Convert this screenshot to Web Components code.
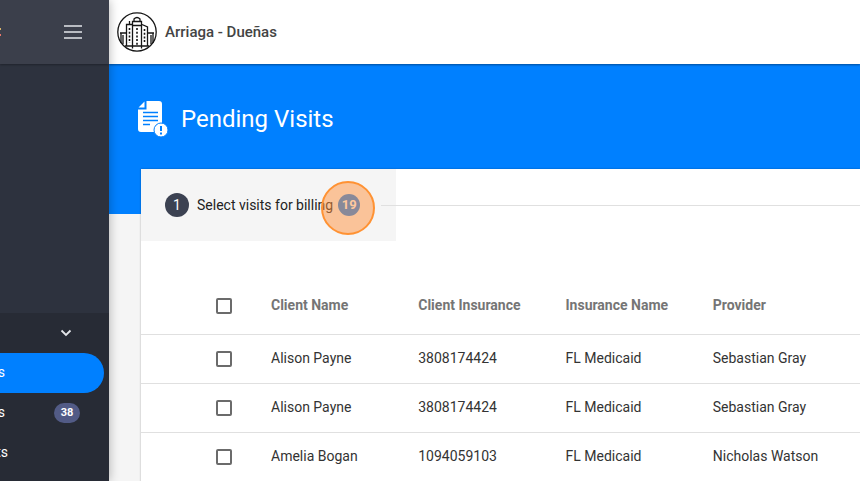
<!DOCTYPE html>
<html lang="en">
<head>
<meta charset="utf-8">
<meta name="viewport" content="width=device-width, initial-scale=1">
<title>Pending Visits</title>
<style>
  html, body { margin: 0; height: 100%; }
  body { font-family: Roboto, "Liberation Sans", sans-serif; font-size: 14px; line-height: 20px; color: #333; background: #f5f5f5; overflow: hidden; }
</style>
</head>
<body>
<app-shell>
  <side-bar slot="side">
    <nav-item active>s</nav-item>
    <nav-item count="38">s</nav-item>
    <nav-item inset>ts</nav-item>
  </side-bar>
  <top-bar slot="top">Arriaga - Dueñas</top-bar>
  <page-header slot="page">Pending Visits</page-header>
  <visits-card slot="page">
    <step-header number="1" count="19">Select visits for billing</step-header>
    <visits-table></visits-table>
  </visits-card>
</app-shell>

<script>
const define = (name, html, setup) => {
  const template = document.createElement('template');
  template.innerHTML = html;
  customElements.define(name, class extends HTMLElement {
    constructor() {
      super();
      this.attachShadow({ mode: 'open' }).append(template.content.cloneNode(true));
    }
    connectedCallback() { if (setup) setup(this, this.shadowRoot); }
  });
};

define('app-shell', `
<style>
  :host { display: grid; grid-template-columns: 109px minmax(0, 1fr); height: 100vh; }
  aside { display: flex; z-index: 2; box-shadow: 0 0 10px rgba(0,0,0,.3); }
  ::slotted([slot=side]) { flex: 1; }
  .content { display: flex; flex-direction: column; min-height: 0; }
  main { flex: 1; min-height: 0; overflow: auto; scrollbar-width: none; background: linear-gradient(#0080ff 150px, #f5f5f5 150px); }
</style>
<aside><slot name="side"></slot></aside>
<div class="content"><slot name="top"></slot><main><slot name="page"></slot></main></div>`);

define('side-bar', `
<style>
  :host { display: flex; flex-direction: column; background: #2d323e; color: #fff; overflow: hidden; }
  header { flex: none; height: 64px; display: flex; align-items: center; justify-content: space-between; padding-right: 26px; background: #3b3f4b; box-shadow: 0 1px 2px rgba(0,0,0,.3); }
  button { display: flex; padding: 0; border: 0; background: none; color: #e4e6ea; }
  .space { flex: none; height: 249px; }
  nav { flex: 1; background: #272b35; }
  .group { width: 100%; height: 40px; align-items: center; justify-content: flex-end; padding-right: 36px; }
</style>
<header>
  <svg width="2" height="14" viewBox="0 0 2 14" aria-hidden="true"><path d="M0 3h1v2H0z" fill="#d9b46a"/><path d="M0 9h1v2H0z" fill="#e9776b"/></svg>
  <button type="button" aria-label="Toggle menu"><svg width="20" height="16" viewBox="0 0 20 16" stroke="currentColor" stroke-width="1.6"><path d="M1 2h18M1 8h18M1 14h18"/></svg></button>
</header>
<div class="space"></div>
<nav>
  <button class="group" type="button" aria-label="Collapse group"><svg width="14" height="14" viewBox="0 0 14 14" fill="none" stroke="currentColor" stroke-width="1.8"><path d="M2.500 4.500 7 9l4.500-4.500"/></svg></button>
  <slot></slot>
</nav>`);

define('nav-item', `
<style>
  :host { display: block; padding-right: 5px; }
  a { display: flex; align-items: center; justify-content: space-between; height: 40px; padding-right: 24px; color: #fff; text-decoration: none; border-radius: 0 20px 20px 0; }
  :host([active]) a { background: #0080ff; }
  .label { display: flex; justify-content: flex-end; width: 5px; padding-bottom: 2px; overflow: hidden; }
  :host([inset]) .label { width: 8px; }
  .count { min-width: 26px; border-radius: 10px; background: #525b86; font-size: 11px; font-weight: 700; text-align: center; }
</style>
<a href="#"><span class="label"><slot></slot></span></a>`, (el, root) => {
  if (el.hasAttribute('count')) {
    const badge = document.createElement('span');
    badge.className = 'count';
    badge.textContent = el.getAttribute('count');
    root.querySelector('a').append(badge);
  }
});

define('top-bar', `
<style>
  :host { position: relative; flex: none; display: flex; align-items: center; gap: 8px; height: 64px; padding: 0 8px; background: #fff; font-size: 15px; font-weight: 500; color: #444; box-shadow: 0 1px 2px rgba(0,0,0,.4); }
</style>
<svg width="40" height="40" viewBox="0 0 40 40" fill="none" stroke="#151515" stroke-width="1.300" aria-hidden="true">
  <circle cx="20" cy="20" r="19.200"/>
  <path d="M3 21h6.500M4 21v10M6 23v9M30.500 21H37M36 21v10M34 23v9M9.500 34V12.500h6M12.500 12.500V9M25 12.500l5.500 2.500v19M15.500 36.500V9.500h9v27M17 9.500V7q3-3 6 0v2.500M15.500 13.500h9M8 34h24"/>
  <path d="M12.500 16v15M20 16v17M27.500 17v14" stroke-width="1.600" stroke-dasharray="2 1.700"/>
</svg>
<span><slot></slot></span>`);

define('page-header', `
<style>
  :host { display: flex; align-items: center; gap: 12px; box-sizing: border-box; height: 105px; padding: 4px 28px 0; color: #fff; }
  h1 { margin: 0; font-size: 24px; line-height: 32px; font-weight: 400; }
</style>
<svg width="32" height="38" viewBox="0 0 32 38" aria-hidden="true">
  <path fill="#fff" d="M9.500 1H22q3 0 3 3v19q-7 1-7.500 9H4q-3 0-3-3V9.500h8.500zM7.500 1.500v6h-6z"/>
  <path d="M6 12.500h15M6 16.500h15M6 20.500h15M6 24.500h7" stroke="#0080ff" stroke-width="1.500"/>
  <circle cx="24" cy="30" r="7" fill="#fff" stroke="#0080ff" stroke-width="1"/>
  <path d="M24 26v5M24 32.500v2" stroke="#0080ff" stroke-width="2"/>
</svg>
<h1><slot></slot></h1>`);

define('visits-card', `
<style>
  :host { display: block; margin-left: 32px; background: #fff; box-shadow: 0 0 2px rgba(0,0,0,.3); }
</style>
<slot></slot>`);

define('step-header', `
<style>
  :host { display: flex; align-items: center; padding-bottom: 37px; color: #222; }
  button { flex: none; display: flex; align-items: center; width: 255px; height: 72px; padding: 0 0 0 24px; border: 0; background: #f5f5f5; font: inherit; color: inherit; }
  .num { width: 24px; height: 24px; line-height: 24px; margin-right: 8px; border-radius: 50%; background: #3c4252; color: #fff; text-align: center; }
  .badge { position: relative; width: 22px; height: 22px; line-height: 22px; margin-left: 5px; border-radius: 50%; background: #1080f4; color: #fff; font-size: 13px; font-weight: 700; text-align: center; }
  .badge::after { content: ""; position: absolute; top: -13px; left: -17px; box-sizing: border-box; width: 54px; height: 54px; border: 2px solid #ff9233; border-radius: 50%; background: rgba(255,146,62,.5); }
  .line { flex: 1; height: 1px; margin-left: -15px; background: #e0e0e0; }
</style>
<button type="button"><span class="num"></span><span><slot></slot></span><span class="badge"></span></button>
<div class="line"></div>`, (el, root) => {
  root.querySelector('.num').textContent = el.getAttribute('number');
  root.querySelector('.badge').textContent = el.getAttribute('count');
});

define('visits-table', `
<style>
  :host { display: block; }
  table { width: 100%; table-layout: fixed; border-collapse: separate; border-spacing: 0; color: #333; }
  th, td { box-sizing: border-box; height: 49px; padding: 0 0 2px; border-bottom: 1px solid #e0e0e0; text-align: left; white-space: nowrap; }
  th { height: 57px; color: #757575; font-weight: 700; }
  .pick { width: 130px; padding: 0 0 0 75px; }
  input { appearance: none; display: block; box-sizing: border-box; width: 16px; height: 16px; margin: 0; border: 2px solid #6b6b6b; border-radius: 2px; background: #fff; }
</style>
<table>
  <thead><tr><th class="pick"><input type="checkbox" aria-label="Select all visits"></th><th>Client Name</th><th>Client Insurance</th><th>Insurance Name</th><th>Provider</th></tr></thead>
  <tbody></tbody>
</table>`, (el, root) => {
  root.querySelector('tbody').innerHTML = [
    ['Alison Payne', '3808174424', 'FL Medicaid', 'Sebastian Gray'],
    ['Alison Payne', '3808174424', 'FL Medicaid', 'Sebastian Gray'],
    ['Amelia Bogan', '1094059103', 'FL Medicaid', 'Nicholas Watson'],
  ].map(row => `<tr><td class="pick"><input type="checkbox" aria-label="Select ${row[0]}"></td>${row.map(c => `<td>${c}</td>`).join('')}</tr>`).join('');
});
</script>
</body>
</html>
